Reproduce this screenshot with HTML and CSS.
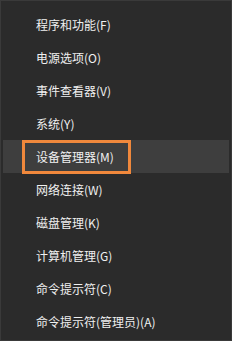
FILE: index.html
```html
<!DOCTYPE html>
<html lang="zh-CN">
<head>
  <meta charset="UTF-8">
  <title>Win+X 菜单</title>
  <link rel="stylesheet" href="styles.css">
</head>
<body>

<div class="menu">
  <div class="item">程序和功能(F)</div>
  <div class="item">电源选项(O)</div>
  <div class="item">事件查看器(V)</div>
  <div class="item">系统(Y)</div>
  <div class="item active"><span class="mark">设备管理器(M)</span></div>
  <div class="item">网络连接(W)</div>
  <div class="item">磁盘管理(K)</div>
  <div class="item">计算机管理(G)</div>
  <div class="item">命令提示符(C)</div>
  <div class="item">命令提示符(管理员)(A)</div>
</div>

</body>
</html>
```

FILE: styles.css
```css
body {
  margin: 0;
  background: #2b2b2b;
  font-family: "Microsoft YaHei", "Noto Sans CJK SC", "Liberation Sans", sans-serif;
}

.menu {
  width: 232px;
  height: 341px;
  box-sizing: border-box;
  border: 1px solid #3a3a3a;
  background: #2b2b2b;
  padding: 7px 2px 0 2px;
}

.item {
  height: 33px;
  display: flex;
  align-items: center;
  padding-left: 33px;
  font-size: 12px;
  color: #f0f0f0;
}

.active {
  background: #3e3e3e;
  padding-left: 19px;
}

.mark {
  width: 109px;
  height: 34px;
  box-sizing: border-box;
  border: 3px solid #f0883c;
  display: flex;
  align-items: center;
  padding-left: 11px;
}
```
